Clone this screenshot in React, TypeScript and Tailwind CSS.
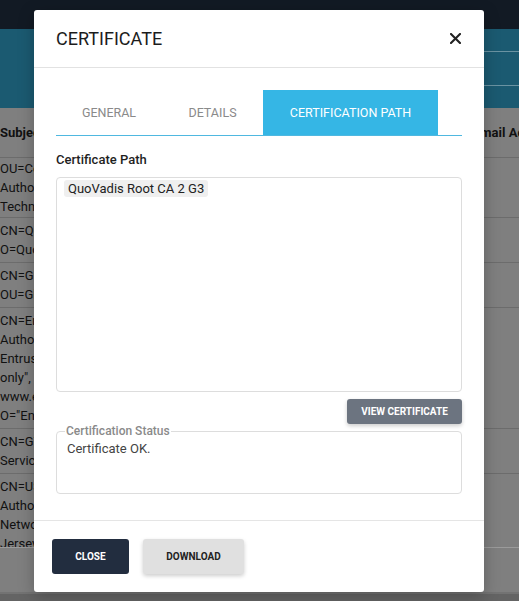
import React from "react";

const rows: string[][] = [
  ["OU=Certum Certification", "Authority, O=Unizeto", "Technologies S.A., C=PL"],
  ["CN=QuoVadis Root CA 2 G3,", "O=QuoVadis Limited, C=BM"],
  ["CN=GlobalSign, O=GlobalSign,", "OU=GlobalSign Root CA - R3"],
  [
    "CN=Entrust Root Certification",
    "Authority - G2, OU=\"(c) 2009",
    "Entrust, Inc. - for authorized use",
    "only\", OU=See",
    "www.entrust.net/legal-terms,",
    "O=\"Entrust, Inc.\", C=US",
  ],
  ["CN=GTS Root R1, O=Google Trust", "Services LLC, C=US"],
  ["CN=USERTrust RSA Certification", "Authority, O=The USERTRUST", "Network, C=US, L=Jersey City,", "Jersey"],
];

export default function App() {
  return (
    <div className="relative w-[519px] h-[601px] overflow-hidden flex flex-col bg-[#7f7f7f] font-['Roboto',sans-serif]">
      {/* background page (dimmed) */}
      <div className="h-[29px] bg-[#121a24] shrink-0" />
      <div className="h-[79px] bg-[#1b5a71] shrink-0 flex justify-end">
        <div className="w-[240px] flex flex-col">
          <div className="h-[23px] border-b border-[#6a93a2]" />
          <div className="h-[34px] border-b border-[#6a93a2]" />
        </div>
      </div>
      <div className="h-[440px] shrink-0 overflow-hidden border-b border-[#9b9b9b] text-[13px] leading-[19px] text-[#111]">
        <div className="h-[50px] grid grid-cols-[473px_1fr] items-center border-b border-[#6c6c6c] font-bold">
          <div>Subject</div>
          <div className="whitespace-nowrap">Email Address</div>
        </div>
        {rows.map((r, i) => (
          <div
            key={i}
            className={
              "grid grid-cols-[473px_1fr] border-b border-[#6c6c6c] " +
              (i === 0 ? "py-[1px]" : "py-[3px]")
            }
          >
            <div>
              {r.map((l, j) => (
                <div key={j} className="whitespace-nowrap">
                  {l}
                </div>
              ))}
            </div>
            <div />
          </div>
        ))}
      </div>
      <div className="flex-1" />
      <div className="h-[9px] shrink-0 bg-[#646464] border-t-2 border-[#737373]" />

      {/* modal */}
      <div className="absolute left-[34px] top-[10px] w-[450px] h-[582px] bg-white rounded-[3px] shadow-[0_4px_16px_rgba(0,0,0,0.25)] flex flex-col text-[#212121]">
        <div className="h-[58px] shrink-0 flex items-center justify-between pl-[22px] pr-[23px] border-b border-[#e2e2e2]">
          <div className="text-[18px] leading-[22px] text-[#1c1c1c]">CERTIFICATE</div>
          <svg width="11" height="11" viewBox="0 0 11 11" className="mt-[-1px]">
            <path d="M1 1 L10 10 M10 1 L1 10" stroke="#222" strokeWidth="2.1" strokeLinecap="square" />
          </svg>
        </div>

        <div className="flex-1 px-[22px] pt-[22px] flex flex-col">
          <div className="flex h-[46px] border-b border-[#4fb8e0] text-[12.5px] uppercase">
            <div className="w-[106px] pt-[2px] flex items-center justify-center text-[#8a8a8a]">General</div>
            <div className="w-[101px] pt-[2px] flex items-center justify-center text-[#8a8a8a]">Details</div>
            <div className="w-[175px] pt-[2px] flex items-center justify-center bg-[#35b6e5] text-white">
              Certification Path
            </div>
          </div>

          <div className="mt-[16px] text-[13px] leading-[16px] font-medium text-[#1f1f1f]">Certificate Path</div>

          <div className="mt-[9px] h-[215px] border border-[#dddddd] rounded-[4px] pt-[2px] pl-[7px] flex flex-col items-start">
            <div className="bg-[#efefef] rounded-[3px] px-[4px] text-[13px] leading-[17px] text-[#222]">
              QuoVadis Root CA 2 G3
            </div>
          </div>

          <div className="flex justify-end mt-[7px]">
            <div className="w-[115px] h-[25px] bg-[#6c7480] rounded-[3px] shadow-[0_2px_4px_rgba(0,0,0,0.2)] flex items-center justify-center text-white text-[10px] font-bold">
              VIEW CERTIFICATE
            </div>
          </div>

          <fieldset className="mt-0 h-[70px] border border-[#dddddd] rounded-[4px] pl-[8px] pr-[10px]">
            <legend className="px-[1px] text-[12px] leading-[14px] font-medium text-[#8a8a8a]">
              Certification Status
            </legend>
            <div className="text-[13px] leading-[16px] text-[#444] mt-[3px] ml-[2px]">Certificate OK.</div>
          </fieldset>
        </div>

        <div className="h-[72px] shrink-0 border-t border-[#e5e5e5] flex items-start pt-[18px] pl-[18px] gap-[14px]">
          <div className="w-[77px] h-[35px] bg-[#222d3f] rounded-[3px] flex items-center justify-center text-white text-[10px] font-bold">
            CLOSE
          </div>
          <div className="w-[101px] h-[35px] bg-[#e0e0e0] rounded-[3px] shadow-[0_2px_4px_rgba(0,0,0,0.2)] flex items-center justify-center text-[#222] text-[10px] font-bold">
            DOWNLOAD
          </div>
        </div>
      </div>
    </div>
  );
}
